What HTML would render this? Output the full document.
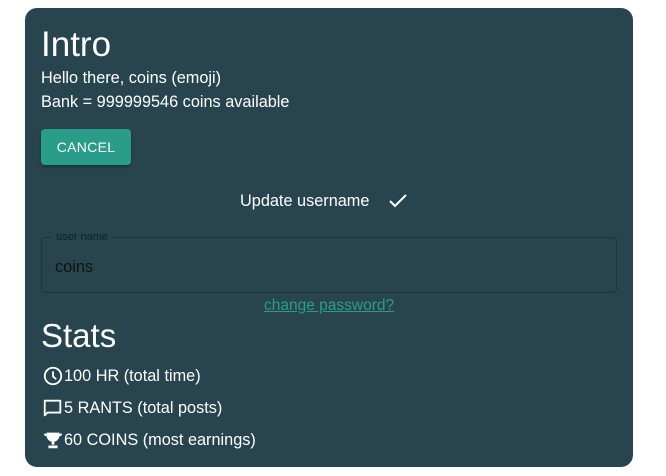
<!DOCTYPE html>
<html><head><style>
body{margin:0;width:666px;height:476px;background:#fff;font-family:"Liberation Sans",Arial,sans-serif;position:relative;overflow:hidden}
.card{position:absolute;left:25px;top:8px;width:608px;height:459px;background:#28454f;border-radius:12px;color:#fff}
.a{position:absolute;white-space:nowrap}
.btn{position:absolute;left:16px;top:121px;width:90px;height:36px;background:#2a9d8a;border-radius:4px;box-shadow:0 2px 3px rgba(0,0,0,.3);color:#fff;font-size:14px;line-height:36px;text-align:center;letter-spacing:.3px}
.field{position:absolute;left:16px;top:229px;width:574px;height:54px;border:1px solid #1d343c;border-radius:4px}
.lbl{position:absolute;left:10px;top:-8px;padding:0 4px;background:#28454f;font-size:11px;color:#0f1f24;line-height:14px}
.st{font-size:16.3px;display:flex;align-items:center}
</style></head><body>
<div class="card">
<div class="a" style="left:16px;top:17px;font-size:35px;line-height:40px">Intro</div>
<div class="a" style="left:16px;top:61px;font-size:16.3px;line-height:18px">Hello there, coins (emoji)</div>
<div class="a" style="left:16px;top:85px;font-size:16.3px;line-height:18px">Bank = 999999546 coins available</div>
<div class="btn">CANCEL</div>
<div class="a" style="left:215px;top:184px;font-size:16.3px;line-height:18px">Update username</div>
<svg class="a" style="left:363px;top:184px" width="20" height="18" viewBox="0 0 20 18"><path d="M2 9l5 5L18 3" stroke="#fff" stroke-width="2" fill="none"/></svg>
<div class="field"><div class="lbl">user name</div><div class="a" style="left:13px;top:20px;font-size:16.3px;color:#111;line-height:18px">coins</div></div>
<div class="a" style="left:239px;top:289px;font-size:15.5px;color:#2a9d8a;text-decoration:underline;line-height:17px">change password?</div>
<div class="a" style="left:16px;top:309px;font-size:33px;line-height:38px">Stats</div>
<div class="a st" style="left:17px;top:357px"><svg width="22" height="22" viewBox="0 0 24 24"><circle cx="12" cy="12" r="9" stroke="#fff" stroke-width="2" fill="none"/><path d="M12 7v5.5l3.5 3" stroke="#fff" stroke-width="2" fill="none"/></svg>100 HR (total time)</div>
<div class="a st" style="left:17px;top:389px"><svg width="22" height="22" viewBox="0 0 24 24"><path d="M3 4h17v13H6l-3 3z" stroke="#fff" stroke-width="2" fill="none" stroke-linejoin="round"/></svg>5 RANTS (total posts)</div>
<div class="a st" style="left:17px;top:421px"><svg width="22" height="22" viewBox="0 0 24 24"><path d="M5 4h14v3a7 7 0 0 1-14 0zM2 5h3v3a3 3 0 0 1-3-3zM22 5h-3v3a3 3 0 0 0 3-3zM10.5 13h3v4h-3zM7 18h10v3H7z" fill="#fff"/></svg>60 COINS (most earnings)</div>
</div>
</body></html>
